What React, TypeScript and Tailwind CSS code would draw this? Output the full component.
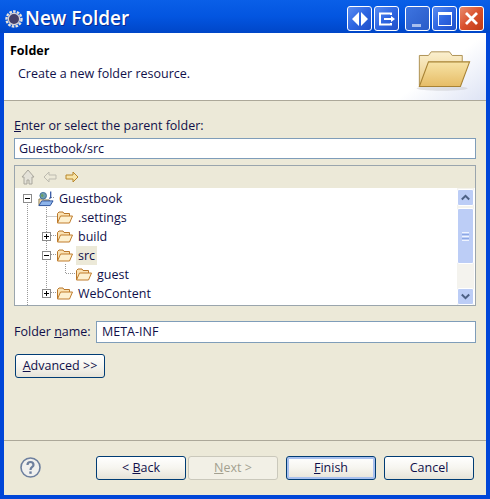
import type { ReactNode } from "react";

const font = "font-['Open_Sans','DejaVu_Sans',sans-serif]";

function CapButton({ children, red, dim }: { children: ReactNode; red?: boolean; dim?: boolean }) {
  return (
    <div
      className={
        "flex h-[25px] w-[25px] items-center justify-center rounded-[3px] border border-white " +
        (red
          ? "bg-gradient-to-br from-[#e88a6c] via-[#d9502c] to-[#c03a14]"
          : dim
          ? "border-[#7d9fe8] bg-gradient-to-br from-[#3d74e0] to-[#2a5cc8]"
          : "bg-gradient-to-br from-[#5a8cf0] via-[#2f66e2] to-[#1f4fc8]")
      }
    >
      {children}
    </div>
  );
}

function TitleBar() {
  return (
    <div className="flex h-[33px] shrink-0 items-center bg-gradient-to-b from-[#0a5fe8] via-[#0355e0] to-[#0046c8] pt-[4px] pr-[6px] pl-[5px]">
      <svg width="18" height="18" viewBox="0 0 18 18" className="mr-[2px]">
        <circle cx="9" cy="9" r="7.5" fill="none" stroke="#e8e4dc" strokeWidth="2.4" strokeDasharray="2.6 1.2" />
        <circle cx="9" cy="9" r="5.6" fill="#45416a" stroke="#d8d4d8" strokeWidth="1.2" />
      </svg>
      <span className="font-['Open_Sans',sans-serif] text-[19px] leading-none font-semibold text-white [text-shadow:1px_1px_0_#0a2a90]">
        New Folder
      </span>
      <div className="ml-auto flex gap-[2px]">
        <CapButton>
          <svg width="18" height="16" viewBox="0 0 18 16">
            <path d="M8 1v14L1 8zM10 1v14l7-7z" fill="#fff" />
          </svg>
        </CapButton>
        <CapButton>
          <svg width="18" height="14" viewBox="0 0 18 14" fill="none">
            <path d="M13 3V1.5H2v11h11V11M2 1.5h11" stroke="#fff" strokeWidth="2" />
            <path d="M6 6h7V4l4 3-4 3V8H6z" fill="#fff" />
          </svg>
        </CapButton>
        <div className="w-[2px]" />
        <CapButton dim>
          <div className="mt-[14px] mr-[2px] h-[3px] w-[9px] bg-[#a8bfee]" />
        </CapButton>
        <CapButton>
          <div className="h-[14px] w-[14px] border-[1.5px] border-t-[3px] border-white" />
        </CapButton>
        <CapButton red>
          <svg width="15" height="15" viewBox="0 0 15 15">
            <path d="M2 2l11 11M13 2L2 13" stroke="#fff" strokeWidth="2.8" />
          </svg>
        </CapButton>
      </div>
    </div>
  );
}

function BigFolder() {
  return (
    <svg width="60" height="42" viewBox="0 0 60 46">
      <defs>
        <linearGradient id="bb" x1="0" y1="0" x2="0" y2="1">
          <stop offset="0" stopColor="#fbf0cf" />
          <stop offset="1" stopColor="#e9c982" />
        </linearGradient>
        <linearGradient id="ff" x1="0" y1="0" x2="0" y2="1">
          <stop offset="0" stopColor="#f7e3a6" />
          <stop offset="1" stopColor="#e6bc66" />
        </linearGradient>
      </defs>
      <ellipse cx="28" cy="42" rx="28" ry="2.5" fill="#c8c8cc" opacity=".5" />
      <path d="M3 39V6h10l3-4h20l3 4h11v7" fill="url(#bb)" stroke="#a88a4a" />
      <path d="M3 40L13 13h45L48 40z" fill="url(#ff)" stroke="#a88335" strokeWidth="1.2" />
    </svg>
  );
}

function Folder() {
  return (
    <svg width="16" height="13" viewBox="0 0 16 13" className="shrink-0">
      <path d="M.5 12V2.5L2 1h4l1 1.5h5.5V5" fill="#fbe3b4" stroke="#b9772a" />
      <path d="M.5 12L3.5 5h12l-3 7z" fill="#fdf0cf" stroke="#c07d2c" />
    </svg>
  );
}

function Box({ open }: { open?: boolean }) {
  return (
    <div className="relative h-[9px] w-[9px] shrink-0 border border-[#8b8b8b] bg-white">
      <div className="absolute top-[3px] left-[1px] h-px w-[5px] bg-black" />
      {!open && <div className="absolute top-[1px] left-[3px] h-[5px] w-px bg-black" />}
    </div>
  );
}

function ProjectIcon() {
  return (
    <svg width="16" height="16" viewBox="0 0 17 16" className="shrink-0">
      <path d="M1 15V8h4l1 1h6v2" fill="#fbe3b4" stroke="#8a7a50" />
      <path d="M1 15l3-5h12l-3 5z" fill="#8db4ea" stroke="#274f9a" />
      <circle cx="5.5" cy="4.5" r="3.5" fill="#6f9fb0" stroke="#3f6f9a" />
      <path d="M4 2.5l2 1.5-1 2-2-1z" fill="#6aa05a" />
      <path d="M13.5 0v6.5l-1.5 1" fill="none" stroke="#2a4fa0" strokeWidth="1.3" />
    </svg>
  );
}

function TreeRow({
  indent,
  box,
  icon,
  label,
  selected,
}: {
  indent: string;
  box?: ReactNode;
  icon: ReactNode;
  label: string;
  selected?: boolean;
}) {
  return (
    <div className={"flex h-[19px] items-center " + indent}>
      <div className="flex w-[9px] shrink-0 items-center">{box}</div>
      <div className="ml-[6px] flex items-center">{icon}</div>
      <span className={"ml-[3px] h-[19px] px-[2px] leading-[19px] " + (selected ? "bg-[#ece9d8]" : "")}>{label}</span>
    </div>
  );
}

function ScrollBtn({ up }: { up?: boolean }) {
  return (
    <div className="flex h-[17px] w-[17px] items-center justify-center rounded-[2px] border border-white bg-[#bccdf6]">
      <svg width="9" height="7" viewBox="0 0 9 7">
        <path d={up ? "M0.8 5.5L4.5 1.8 8.2 5.5" : "M0.8 1.5L4.5 5.2 8.2 1.5"} fill="none" stroke="#4d6185" strokeWidth="2" />
      </svg>
    </div>
  );
}

function Tree() {
  return (
    <div className="mx-[10px] mt-[6px] flex h-[141px] flex-col border border-[#9aa5ad] bg-white">
      <div className="flex h-[22px] shrink-0 items-center gap-[8px] bg-[#ece9d8] pl-[6px]">
        <svg width="14" height="16" viewBox="0 0 14 16" fill="#e4e2d8" stroke="#a8a69c">
          <path d="M7 1L1 8h2v7h3v-4h2v4h3V8h2z" />
        </svg>
        <svg width="14" height="12" viewBox="0 0 14 12" fill="#ece9d8" stroke="#bdbbb0">
          <path d="M6 1L1 6l5 5V8h7V4H6z" />
        </svg>
        <svg width="14" height="12" viewBox="0 0 14 12" fill="#f7e4a8" stroke="#b8862a">
          <path d="M8 1l5 5-5 5V8H1V4h7z" />
        </svg>
      </div>
      <div className="flex min-h-0 flex-1">
        <div className="relative min-w-0 flex-1 overflow-hidden pt-px text-[12.5px] text-[#10104a]">
          <svg width="120" height="117" className="absolute top-0 left-0" fill="none" stroke="#999" strokeDasharray="1 1">
            <path d="M12.5 14V117M31.5 19V108M31.5 28.5H44M50.5 76V85.5H62M36 9.5h3M36 47.5h8M36 66.5h8M36 104.5h8" />
          </svg>
          <div className="relative">
            <TreeRow indent="pl-[8px]" box={<Box open />} icon={<ProjectIcon />} label="Guestbook" />
            <TreeRow indent="pl-[27px]" icon={<Folder />} label=".settings" />
            <TreeRow indent="pl-[27px]" box={<Box />} icon={<Folder />} label="build" />
            <TreeRow indent="pl-[27px]" box={<Box open />} icon={<Folder />} label="src" selected />
            <TreeRow indent="pl-[46px]" icon={<Folder />} label="guest" />
            <TreeRow indent="pl-[27px]" box={<Box />} icon={<Folder />} label="WebContent" />
          </div>
        </div>
        <div className="mr-px flex w-[17px] shrink-0 flex-col bg-[#f4f3ee] pt-px">
          <ScrollBtn up />
          <div className="mt-[2px] flex h-[56px] items-center justify-center rounded-[2px] border border-white bg-[#bccdf6]">
            <div className="flex w-[7px] flex-col gap-px">
              <div className="h-px bg-[#eef3fe]" />
              <div className="h-px bg-[#8ca7e4]" />
              <div className="h-px bg-[#eef3fe]" />
              <div className="h-px bg-[#8ca7e4]" />
              <div className="h-px bg-[#eef3fe]" />
            </div>
          </div>
          <div className="flex-1" />
          <ScrollBtn />
        </div>
      </div>
    </div>
  );
}

function XpButton({
  children,
  disabled,
  focused,
  className = "",
}: {
  children: ReactNode;
  disabled?: boolean;
  focused?: boolean;
  className?: string;
}) {
  return (
    <button
      className={
        "flex h-[24px] w-[90px] items-center justify-center rounded-[3px] border pt-px text-[12.5px] " +
        (disabled
          ? "border-[#cac8bb] bg-[#f2f0e6] text-[#a3a08f] "
          : "border-[#003c74] bg-gradient-to-b from-white via-[#f6f5ef] to-[#e6e3d8] text-[#10104a] ") +
        (focused ? "shadow-[inset_0_0_0_2px_#a8c0ee] " : "") +
        className
      }
    >
      {children}
    </button>
  );
}

export default function App() {
  return (
    <div className={"flex h-[499px] w-[490px] flex-col overflow-hidden bg-[#0046d8] " + font}>
      <TitleBar />
      <div className="mx-[4px] mb-[4px] flex min-h-0 flex-1 flex-col bg-[#ece9d8] text-[12.5px] text-[#10104a]">
        <div className="relative flex h-[68px] shrink-0 flex-col border-b border-[#aca899] bg-white pl-[6px]">
          <div className="absolute top-0 right-0 h-full w-[90px] bg-gradient-to-br from-white via-white to-[#dde3f4]" />
          <div className="pt-[9px] text-[12.5px] leading-[18px] font-bold text-black">Folder</div>
          <div className="pt-[5px] pl-[8px] leading-[18px]">Create a new folder resource.</div>
          <div className="absolute top-[17px] right-[12px]">
            <BigFolder />
          </div>
        </div>
        <div className="flex min-h-0 flex-1 flex-col">
          <div className="mt-[16px] h-[18px] px-[10px] leading-[18px]">
            <span className="underline">E</span>nter or select the parent folder:
          </div>
          <div className="mx-[10px] mt-[3px] flex h-[21px] items-center border border-[#7f9db9] bg-white px-[4px] pt-px">Guestbook/src</div>
          <Tree />
          <div className="mx-[10px] mt-[15px] flex items-center">
            <span className="w-[82px] shrink-0">
              Folder <span className="underline">n</span>ame:
            </span>
            <div className="flex h-[22px] flex-1 items-center border border-[#7f9db9] bg-white px-[5px]">META-INF</div>
          </div>
          <XpButton className="mt-[11px] ml-[11px]">
            <span>
              <span className="underline">A</span>dvanced &gt;&gt;
            </span>
          </XpButton>
          <div className="mt-auto flex h-[55px] shrink-0 items-start border-t border-[#aca899] pt-[15px] pr-[12px] pl-[16px]">
            <svg width="21" height="21" viewBox="0 0 21 21" className="mt-[1px]">
              <circle cx="10.5" cy="10.5" r="9.5" fill="#f0f0ee" stroke="#6d7f9e" strokeWidth="1.6" />
              <path d="M7.5 8c0-4 6-4 6 0 0 2-3 2-3 5" fill="none" stroke="#6d7f9e" strokeWidth="2.2" />
              <rect x="9.3" y="14.4" width="2.4" height="2.4" fill="#6d7f9e" />
            </svg>
            <div className="ml-auto flex">
              <XpButton>
                <span>
                  &lt; <span className="underline">B</span>ack
                </span>
              </XpButton>
              <XpButton disabled className="ml-[2px]">
                <span>
                  <span className="underline">N</span>ext &gt;
                </span>
              </XpButton>
              <XpButton focused className="ml-[8px]">
                <span>
                  <span className="underline">F</span>inish
                </span>
              </XpButton>
              <XpButton className="ml-[8px]">Cancel</XpButton>
            </div>
          </div>
        </div>
      </div>
    </div>
  );
}
